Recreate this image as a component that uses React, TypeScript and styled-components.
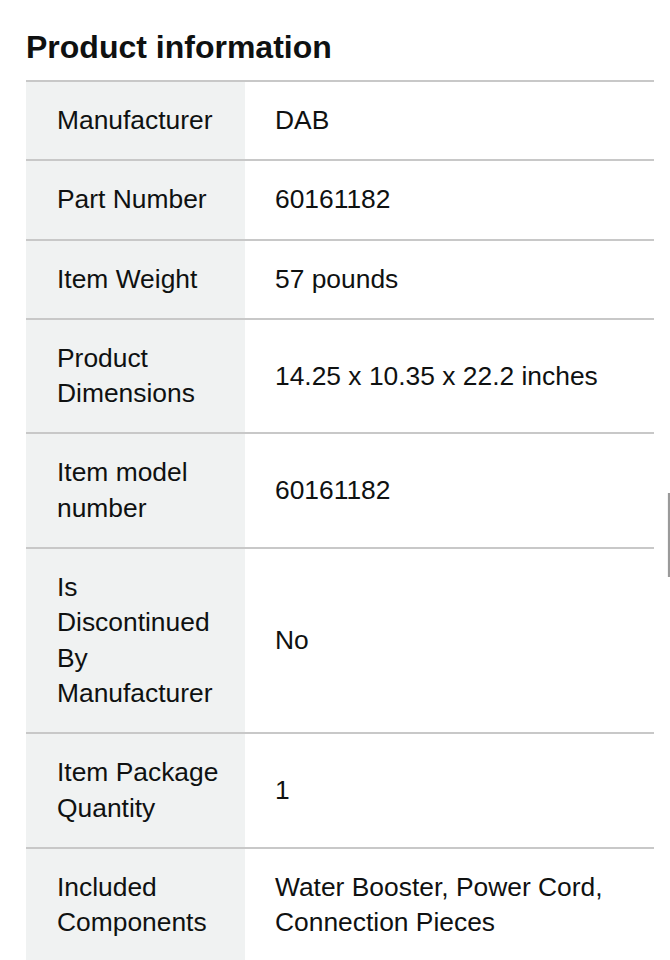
import React from 'react'
import styled, { createGlobalStyle } from 'styled-components'

const GlobalStyle = createGlobalStyle`
  html, body {
    margin: 0;
    padding: 0;
    background: #ffffff;
  }
  body {
    font-family: "Liberation Sans", Arial, sans-serif;
    color: #0f1111;
    overflow: hidden;
  }
`

const Page = styled.div`
  padding: 0 16px 0 26px;
  height: 960px;
  overflow: hidden;
`

const Title = styled.h2`
  margin: 27px 0 13px;
  font-size: 32px;
  line-height: 40px;
  font-weight: 700;
  color: #0f1111;
`

const Table = styled.table`
  width: 628px;
  border-collapse: collapse;
  border-top: 2px solid #c8c8c8;
`

const Row = styled.tr`
  border-bottom: 2px solid #c8c8c8;
`

const Label = styled.th`
  width: 219px;
  box-sizing: border-box;
  background: #f0f2f2;
  padding: 21px 10px 21px 31px;
  text-align: left;
  vertical-align: middle;
  font-weight: 400;
  font-size: 26.4px;
  line-height: 35.3px;
`

const Value = styled.td`
  padding: 21px 16px 21px 30px;
  vertical-align: middle;
  font-size: 26.4px;
  line-height: 35.3px;
`

const ScrollHint = styled.div`
  position: fixed;
  right: 0;
  top: 493px;
  width: 2px;
  height: 84px;
  background: #9a9a9a;
  border-left: 1px solid #f4f4f4;
`

const rows: [React.ReactNode, React.ReactNode][] = [
  ['Manufacturer', 'DAB'],
  ['Part Number', '60161182'],
  ['Item Weight', '57 pounds'],
  [<>Product<br />Dimensions</>, '14.25 x 10.35 x 22.2 inches'],
  [<>Item model<br />number</>, '60161182'],
  [<>Is<br />Discontinued<br />By<br />Manufacturer</>, 'No'],
  [<>Item Package<br />Quantity</>, '1'],
  [<>Included<br />Components</>, <>Water Booster, Power Cord,<br />Connection Pieces</>],
]

export default function App() {
  return (
    <>
      <GlobalStyle />
      <Page>
        <Title>Product information</Title>
        <Table>
          <tbody>
            {rows.map(([label, value], i) => (
              <Row key={i}>
                <Label>{label}</Label>
                <Value>{value}</Value>
              </Row>
            ))}
          </tbody>
        </Table>
      </Page>
      <ScrollHint />
    </>
  )
}
